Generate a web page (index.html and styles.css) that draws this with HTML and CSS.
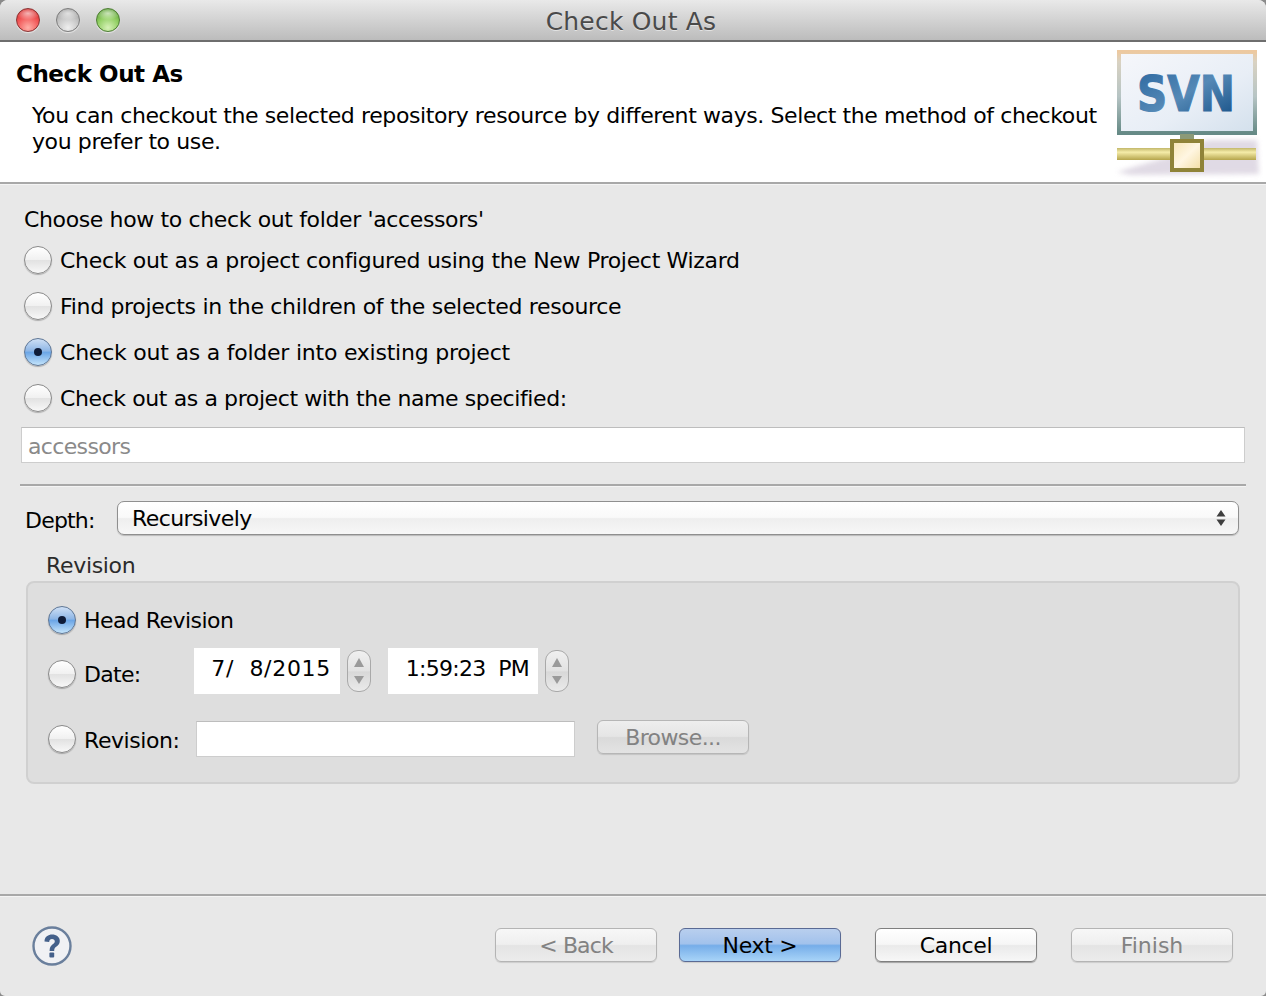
FILE: index.html
```html
<!DOCTYPE html>
<html lang="en">
<head>
<meta charset="utf-8">
<title>Check Out As</title>
<link rel="stylesheet" href="styles.css">
</head>
<body>
<div class="window">
  <header class="titlebar">
    <div class="lights">
      <span class="light light-close"></span>
      <span class="light light-min"></span>
      <span class="light light-zoom"></span>
    </div>
    <div class="window-title">Check Out As</div>
  </header>

  <section class="banner">
    <div class="banner-text">
      <h1 class="banner-title">Check Out As</h1>
      <p class="banner-desc">You can checkout the selected repository resource by different ways. Select the method of checkout you prefer to use.</p>
    </div>
    <svg class="svn-logo" width="152" height="130" viewBox="0 0 152 130" aria-label="SVN">
      <defs>
        <linearGradient id="screen" x1="0" y1="0" x2="1" y2="1">
          <stop offset="0" stop-color="#f6f7fb"/>
          <stop offset="0.6" stop-color="#e8eef6"/>
          <stop offset="1" stop-color="#d3e0ec"/>
        </linearGradient>
        <linearGradient id="frame" x1="0" y1="0" x2="0" y2="1">
          <stop offset="0" stop-color="#edc9a0"/>
          <stop offset="0.12" stop-color="#d9d2c2"/>
          <stop offset="0.55" stop-color="#b6c4c4"/>
          <stop offset="1" stop-color="#668a86"/>
        </linearGradient>
        <linearGradient id="letters" x1="0" y1="0" x2="1" y2="1">
          <stop offset="0" stop-color="#2a669f"/>
          <stop offset="0.5" stop-color="#5589b6"/>
          <stop offset="1" stop-color="#114b82"/>
        </linearGradient>
        <linearGradient id="bar" x1="0" y1="0" x2="0" y2="1">
          <stop offset="0" stop-color="#c2b76a"/>
          <stop offset="0.35" stop-color="#f5eca9"/>
          <stop offset="1" stop-color="#b5a54c"/>
        </linearGradient>
        <linearGradient id="boxfill" x1="0" y1="0" x2="1" y2="1">
          <stop offset="0" stop-color="#f6e4b2"/>
          <stop offset="0.5" stop-color="#fff6e2"/>
          <stop offset="1" stop-color="#f2dca0"/>
        </linearGradient>
        <filter id="soft" x="-10%" y="-30%" width="120%" height="160%">
          <feGaussianBlur stdDeviation="2.5"/>
        </filter>
      </defs>
      <path d="M6 122 L60 106 L96 90 L146 90 L148 124 L20 125 Z" fill="#d6cedc" opacity="0.75" filter="url(#soft)"/>
      <rect x="8" y="2" width="136" height="81" fill="url(#screen)" stroke="url(#frame)" stroke-width="4"/>
      <text class="svn-text" x="26" y="61" textLength="98" lengthAdjust="spacingAndGlyphs" fill="url(#letters)" stroke="url(#letters)" stroke-width="1.2">SVN</text>
      <rect x="69" y="84" width="14" height="6" fill="#8c9a78"/>
      <rect x="6" y="98" width="139" height="12" fill="url(#bar)"/>
      <rect x="61" y="91" width="30" height="29" fill="url(#boxfill)" stroke="#8f8338" stroke-width="4"/>
    </svg>
  </section>
  <div class="rule rule-banner"></div>

  <main class="content">
    <div class="choose">Choose how to check out folder 'accessors'</div>
    <div class="choices">
      <label class="choice"><span class="radio"></span>Check out as a project configured using the New Project Wizard</label>
      <label class="choice"><span class="radio"></span>Find projects in the children of the selected resource</label>
      <label class="choice choice-loose"><span class="radio radio-on"></span>Check out as a folder into existing project</label>
      <label class="choice choice-tight"><span class="radio"></span>Check out as a project with the name specified:</label>
    </div>
    <input class="field field-name" type="text" value="accessors" disabled>
    <div class="rule rule-mid"></div>
    <div class="depth">
      <span class="depth-label">Depth:</span>
      <div class="select">
        <span>Recursively</span>
        <svg width="10" height="18" viewBox="0 0 10 18" aria-hidden="true"><path d="M5 1 L9.5 7.5 H0.5 Z M0.5 10.5 H9.5 L5 17 Z" fill="#3f3f3f"/></svg>
      </div>
    </div>
    <div class="group-label">Revision</div>
    <section class="group">
      <div class="group-head"><span class="radio radio-on"></span><span>Head Revision</span></div>
      <div class="group-date">
        <span class="radio"></span>
        <span class="group-key">Date:</span>
        <span class="stamp stamp-date">7/&nbsp; 8/2015</span>
        <span class="spin"><i class="up"></i><i class="down"></i></span>
        <span class="stamp stamp-time">1:59:23&nbsp; PM</span>
        <span class="spin"><i class="up"></i><i class="down"></i></span>
      </div>
      <div class="group-rev">
        <span class="radio"></span>
        <span class="group-key">Revision:</span>
        <input class="field field-rev" type="text" disabled>
        <button class="btn btn-browse" disabled>Browse...</button>
      </div>
    </section>
  </main>

  <div class="rule rule-foot"></div>
  <footer class="footer">
    <svg class="help" width="42" height="42" viewBox="0 0 42 42" aria-label="Help">
      <circle cx="21" cy="21" r="18.5" fill="#f0f1f4" stroke="#6a7f9c" stroke-width="2.4"/>
      <path d="M13.5 16.5 C13.5 11.5 17.5 9.5 21 9.5 C25.4 9.5 28.8 12 28.8 16 C28.8 19 27 20.4 25.2 21.8 C23.6 23 23.2 23.8 23.2 26 H18.6 C18.6 22.8 19.6 21 21.4 19.6 C23 18.3 23.8 17.6 23.8 16.3 C23.8 14.9 22.8 13.9 21 13.9 C19.3 13.9 18.2 15 18.2 17 Z" fill="#44608a"/>
      <rect x="18.4" y="27.6" width="4.8" height="4.8" rx="1" fill="#44608a"/>
    </svg>
    <div class="footer-buttons">
      <button class="btn btn-nav btn-back" disabled>&lt; Back</button>
      <button class="btn btn-nav btn-default">Next &gt;</button>
      <button class="btn btn-nav btn-active btn-cancel">Cancel</button>
      <button class="btn btn-nav btn-finish" disabled>Finish</button>
    </div>
  </footer>
</div>
</body>
</html>
```

FILE: styles.css
```css
* { box-sizing: border-box; }
html, body { margin: 0; padding: 0; height: 100%; background: #8a8a8a; }
body {
  font-family: "DejaVu Sans", "Liberation Sans", sans-serif;
  font-size: 22px;
  letter-spacing: -0.32px;
  color: #000;
}
.window {
  width: 1266px;
  height: 996px;
  display: flex;
  flex-direction: column;
  background: #e8e8e8;
  overflow: hidden;
  border-radius: 8px 8px 5px 5px;
}

/* title bar */
.titlebar {
  position: relative;
  height: 42px;
  flex: none;
  background: linear-gradient(#e9e9e9, #bcbcbc);
  border-bottom: 2px solid #6e6e6e;
  display: flex;
  align-items: center;
  justify-content: center;
  padding: 3px 4px 0 0;
}
.lights {
  position: absolute;
  left: 16px;
  top: 8px;
  display: flex;
  gap: 16px;
}
.light {
  width: 24px;
  height: 24px;
  border-radius: 50%;
  border: 1px solid #6a6a6a;
  box-shadow: 0 1px 1px rgba(255, 255, 255, 0.6);
}
.light-close {
  background: radial-gradient(ellipse 55% 30% at 50% 20%, rgba(255, 255, 255, 0.6), transparent),
    radial-gradient(circle at 50% 85%, #ffb0a8 0, #f25a5a 50%, #d72a2a 85%);
  border-color: #8a3333;
}
.light-min {
  background: radial-gradient(ellipse 55% 30% at 50% 20%, rgba(255, 255, 255, 0.6), transparent),
    radial-gradient(circle at 50% 85%, #efefef 0, #c6c6c6 50%, #a0a0a0 85%);
  border-color: #7c7c7c;
}
.light-zoom {
  background: radial-gradient(ellipse 55% 30% at 50% 20%, rgba(255, 255, 255, 0.6), transparent),
    radial-gradient(circle at 50% 85%, #d7f2b8 0, #92cf64 50%, #5da136 85%);
  border-color: #4d7e33;
}
.window-title {
  font-size: 25px;
  color: #4a4a4a;
  text-shadow: 0 1px 0 rgba(255, 255, 255, 0.5);
  letter-spacing: 0.2px;
}

/* banner */
.banner {
  height: 140px;
  flex: none;
  background: #fff;
  display: flex;
  justify-content: space-between;
  padding: 8px 3px 0 16px;
}
.banner-text { width: 1090px; }
.banner-title {
  margin: 0;
  font-size: 23px;
  letter-spacing: -0.45px;
  font-weight: bold;
  line-height: 30px;
  padding-top: 9px;
}
.banner-desc {
  margin: 14px 0 0 16px;
  line-height: 26px;
  letter-spacing: -0.4px;
}
.svn-logo { flex: none; }
.svn-text {
  font-family: "DejaVu Sans", sans-serif;
  font-weight: bold;
  font-size: 50px;
  letter-spacing: 0;
}

/* rules */
.rule {
  height: 3px;
  flex: none;
  background: linear-gradient(#a8a8a8 0, #a8a8a8 2px, #f4f4f4 2px);
}

/* main */
.content {
  flex: 1;
  padding: 0 20px;
}
.choose {
  margin-left: 4px;
  height: 52px;
  padding-top: 20px;
  line-height: 30px;
  letter-spacing: -0.37px;
}
.choices { display: flex; flex-direction: column; }
.choice {
  height: 46px;
  margin-left: 4px;
  display: flex;
  align-items: center;
  gap: 8px;
}
.choice-loose { letter-spacing: -0.23px; }
.choice-tight { letter-spacing: -0.4px; }
.radio {
  flex: none;
  width: 28px;
  height: 28px;
  border-radius: 50%;
  border: 1px solid #8a8a8a;
  background: linear-gradient(#ffffff 0, #f1f1f1 48%, #e2e2e2 52%, #f8f8f8 100%);
  box-shadow: 0 1px 1px rgba(0, 0, 0, 0.25);
  display: flex;
  align-items: center;
  justify-content: center;
}
.radio-on {
  border-color: #5f7796;
  background: linear-gradient(#cfe0f5 0, #8fb7e6 45%, #6ca6e6 52%, #c4e4fb 100%);
}
.radio-on::after {
  content: "";
  width: 8px;
  height: 8px;
  border-radius: 50%;
  background: #0f1c38;
}
.field {
  display: block;
  border: 1px solid #cdcdcd;
  border-top-color: #bdbdbd;
  background: #fff;
  font: inherit;
  letter-spacing: inherit;
  padding: 2px 6px 0;
  margin: 0;
  border-radius: 0;
  outline: 0;
}
.field-name {
  width: 1224px;
  height: 36px;
  margin: 6px 0 0 1px;
  color: #8a8a8a;
  -webkit-text-fill-color: #8a8a8a;
  letter-spacing: -0.65px;
  opacity: 1;
}
.rule-mid { margin-top: 21px; width: 1226px; }
.depth {
  margin-top: 14px;
  padding-left: 5px;
  display: flex;
  height: 34px;
  align-items: center;
  justify-content: space-between;
  width: 1219px;
}
.depth-label { padding-top: 4px; letter-spacing: -0.8px; }
.select {
  width: 1122px;
  height: 34px;
  border: 1px solid #8f8f8f;
  border-radius: 7px;
  background: linear-gradient(#ffffff 0, #f9f9f9 48%, #eeeeee 52%, #f7f7f7 100%);
  box-shadow: 0 1px 1px rgba(0, 0, 0, 0.2);
  display: flex;
  align-items: center;
  justify-content: space-between;
  padding: 0 12px 0 14px;
  letter-spacing: -0.6px;
}
.group-label {
  height: 46px;
  margin-left: 26px;
  padding-top: 17px;
  line-height: 28px;
  color: #2b2b2b;
}
.group {
  width: 1214px;
  height: 203px;
  margin-left: 6px;
  background: #dedede;
  border: 2px solid #d0d0d0;
  border-radius: 8px;
  padding: 23px 20px 0 20px;
}
.group-head, .group-date, .group-rev { display: flex; align-items: center; }
.group-head { height: 28px; gap: 8px; letter-spacing: -0.55px; }
.group-date { height: 46px; margin-top: 14px; }
.group-rev { height: 38px; margin-top: 26px; }
.group-date .radio { position: relative; top: 3px; }
.group-key { width: 118px; padding-left: 8px; flex: none; }
.group-date .group-key { position: relative; top: 3px; letter-spacing: -0.7px; }
.group-rev .group-key { width: 120px; position: relative; top: 1px; letter-spacing: -0.42px; }
.stamp {
  background: #fff;
  height: 46px;
  display: flex;
  align-items: center;
  justify-content: flex-end;
  padding: 0 9px 6px 0;
  white-space: nowrap;
}
.stamp-date { width: 146px; letter-spacing: 0.7px; }
.stamp-time { width: 150px; margin-left: 17px; letter-spacing: -0.7px; }
.spin {
  width: 24px;
  height: 42px;
  margin-left: 7px;
  flex: none;
  border: 1px solid #a9a9a9;
  border-radius: 11px;
  background: linear-gradient(#f0f0f0, #e2e2e2 50%, #d8d8d8 52%, #eaeaea);
  display: flex;
  flex-direction: column;
  align-items: center;
  justify-content: center;
  gap: 9px;
}
.spin i { display: block; width: 0; height: 0; border-left: 5px solid transparent; border-right: 5px solid transparent; }
.spin .up { border-bottom: 9px solid #9a9a9a; }
.spin .down { border-top: 8px solid #9a9a9a; }
.field-rev { width: 379px; height: 36px; }
.btn {
  font: inherit;
  letter-spacing: inherit;
  height: 34px;
  padding: 1px 0 0;
  border: 1px solid #b4b4b4;
  border-radius: 6px;
  color: #828282;
  background: linear-gradient(#f7f7f7 0, #efefef 48%, #e4e4e4 52%, #ececec 100%);
  box-shadow: 0 1px 1px rgba(0, 0, 0, 0.12);
  display: block;
}
.btn-browse {
  width: 152px;
  margin: -4px 0 0 22px;
  letter-spacing: -0.6px;
  border-color: #b6b6b6;
  background: linear-gradient(#eeeeee 0, #e5e5e5 48%, #dadada 52%, #e3e3e3 100%);
}

/* footer */
.rule-foot { margin: 0; }
.footer {
  height: 99px;
  flex: none;
  padding: 31px 33px 0 31px;
  display: flex;
  justify-content: space-between;
  align-items: flex-start;
}
.help { margin-top: -3px; }
.footer-buttons { display: flex; gap: 22px; }
.btn-nav { width: 162px; }
.btn-back { letter-spacing: -0.9px; }
.btn-finish { letter-spacing: 0; }
.btn-cancel, .btn-finish { margin-left: 12px; }
.btn-default {
  color: #000;
  border-color: #5a6a94;
  background: linear-gradient(#b9cfee 0, #a2c2ec 46%, #76ade9 52%, #a8d4f8 100%);
}
.btn-active {
  color: #000;
  border-color: #7f7f7f;
  background: linear-gradient(#ffffff 0, #f6f6f6 48%, #eaeaea 52%, #f7f7f7 100%);
  box-shadow: 0 1px 1px rgba(0, 0, 0, 0.3);
}
```
